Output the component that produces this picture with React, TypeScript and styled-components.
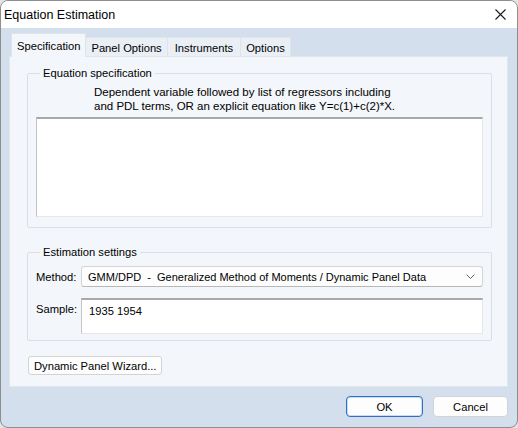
import React from "react";
import styled, { createGlobalStyle } from "styled-components";

const Global = createGlobalStyle`
  html, body { margin: 0; padding: 0; background: #e4e4e4; }
  body { font-family: "Liberation Sans", Arial, sans-serif; font-size: 11.2px; color: #000; }
  * { box-sizing: border-box; }
`;

const Window = styled.div`
  width: 518px;
  height: 428px;
  border: 1px solid #8e8e8e;
  border-radius: 8px;
  overflow: hidden;
  display: flex;
  flex-direction: column;
  background: #d4dfee;
`;

const TitleBar = styled.div`
  height: 27px;
  background: #ffffff;
  display: flex;
  align-items: center;
  justify-content: space-between;
  padding: 0 11px 0 3px;
`;

const Title = styled.span`
  font-size: 12.5px;
  color: #000;
`;

const CloseBtn = styled.div`
  width: 12px;
  height: 12px;
  display: flex;
  align-items: center;
  justify-content: center;
`;

const Body = styled.div`
  flex: 1;
  display: flex;
  flex-direction: column;
  padding: 6px 9px 0 8px;
`;

const TabRow = styled.div`
  display: flex;
  align-items: flex-end;
  padding-left: 2px;
  height: 23px;
  position: relative;
  z-index: 1;
  margin-bottom: -1px;
`;

const Tab = styled.div<{ $active?: boolean; $pad?: number }>`
  height: ${(p) => (p.$active ? "24px" : "20px")};
  padding: 0 ${(p) => p.$pad ?? 5}px;
  display: flex;
  align-items: center;
  background: ${(p) => (p.$active ? "#f3f6fa" : "#eaeff6")};
  border: 1px solid #dfe4eb;
  border-bottom: ${(p) => (p.$active ? "none" : "1px solid #dfe4eb")};
  margin-left: ${(p) => (p.$active ? "0" : "-1px")};
  padding-top: ${(p) => (p.$active ? "0" : "1px")};
`;

const Panel = styled.div`
  height: 331px;
  background: #f3f6fa;
  border: 1px solid #e1e6ec;
  display: flex;
  flex-direction: column;
  padding: 9px 15px 0 17px;
`;

const Group = styled.fieldset<{ $gap?: number; $pb: number }>`
  margin: ${(p) => p.$gap ?? 0}px 0 0 0;
  padding: 0 8px ${(p) => p.$pb}px 8px;
  border: 1px solid #dadfe6;
  border-radius: 2px;
  min-width: 0;
  display: flex;
  flex-direction: column;
`;

const Legend = styled.legend`
  padding: 0 3px;
  margin-left: 4px;
  line-height: 14px;
`;

const Description = styled.div`
  margin: 5px 0 0 0;
  padding-left: 58px;
  line-height: 14px;
  font-size: 11.5px;
`;

const EditBox = styled.div<{ $h: number; $mt?: number }>`
  height: ${(p) => p.$h}px;
  margin-top: ${(p) => p.$mt ?? 0}px;
  flex-shrink: 0;
  background: #ffffff;
  border: 1px solid #e6e6e6;
  border-top: 2px solid #a8a8a8;
  border-left-color: #c4c4c4;
  padding: 5px 7px;
`;

const FieldRow = styled.div<{ $mt: number; $align?: string }>`
  display: flex;
  align-items: ${(p) => p.$align ?? "center"};
  margin-top: ${(p) => p.$mt}px;
`;

const Label = styled.div<{ $pt?: number }>`
  width: 45px;
  flex-shrink: 0;
  padding-top: ${(p) => p.$pt ?? 0}px;
`;

const FieldBody = styled.div`
  flex: 1;
  min-width: 0;
  display: flex;
  flex-direction: column;
`;

const Select = styled.div`
  flex: 1;
  height: 21px;
  background: #fdfdfd;
  border: 1px solid #d5d5d5;
  border-bottom-color: #b8b8b8;
  border-radius: 3px;
  display: flex;
  align-items: center;
  justify-content: space-between;
  padding: 0 7px 0 6px;
  white-space: pre;
  font-size: 11px;
`;

const Wizard = styled.button`
  align-self: flex-start;
  margin: 15px 0 0 1px;
  height: 19px;
  padding: 0 5px;
  background: #fdfdfd;
  border: 1px solid #d3d3d3;
  border-radius: 3px;
  font-family: inherit;
  font-size: 11.2px;
  color: #000;
`;

const Footer = styled.div`
  display: flex;
  justify-content: flex-end;
  gap: 10px;
  padding: 9px 0 0 0;
`;

const DlgButton = styled.button<{ $default?: boolean; $w: number }>`
  width: ${(p) => p.$w}px;
  height: 21px;
  background: #fdfdfd;
  border: 1px solid ${(p) => (p.$default ? "#2f6fc4" : "#d3d3d3")};
  box-shadow: ${(p) => (p.$default ? "inset 0 0 0 1px #c9dcf3" : "none")};
  border-radius: 4px;
  font-family: inherit;
  font-size: 11.2px;
  color: #000;
`;

export default function App() {
  return (
    <>
      <Global />
      <Window>
        <TitleBar>
          <Title>Equation Estimation</Title>
          <CloseBtn>
            <svg width="11" height="11" viewBox="0 0 11 11">
              <path d="M0.5 0.5 L10.5 10.5 M10.5 0.5 L0.5 10.5" stroke="#1a1a1a" strokeWidth="1.1" fill="none" />
            </svg>
          </CloseBtn>
        </TitleBar>
        <Body>
          <TabRow>
            <Tab $active>Specification</Tab>
            <Tab>Panel Options</Tab>
            <Tab $pad={7}>Instruments</Tab>
            <Tab>Options</Tab>
          </TabRow>
          <Panel>
            <Group $pb={10}>
              <Legend>Equation specification</Legend>
              <Description>
                Dependent variable followed by list of regressors including
                <br />
                and PDL terms, OR an explicit equation like Y=c(1)+c(2)*X.
              </Description>
              <EditBox $h={100} $mt={4} />
            </Group>
            <Group $gap={17} $pb={6}>
              <Legend>Estimation settings</Legend>
              <FieldRow $mt={7}>
                <Label>Method:</Label>
                <Select>
                  <span>GMM/DPD  -  Generalized Method of Moments / Dynamic Panel Data</span>
                  <svg width="9" height="5" viewBox="0 0 9 5">
                    <path d="M0.5 0.5 L4.5 4.5 L8.5 0.5" stroke="#606060" strokeWidth="1" fill="none" />
                  </svg>
                </Select>
              </FieldRow>
              <FieldRow $mt={11} $align="flex-start">
                <Label $pt={5}>Sample:</Label>
                <FieldBody>
                  <EditBox $h={36}>1935 1954</EditBox>
                </FieldBody>
              </FieldRow>
            </Group>
            <Wizard>Dynamic Panel Wizard...</Wizard>
          </Panel>
          <Footer>
            <DlgButton $default $w={77}>OK</DlgButton>
            <DlgButton $w={75}>Cancel</DlgButton>
          </Footer>
        </Body>
      </Window>
    </>
  );
}
